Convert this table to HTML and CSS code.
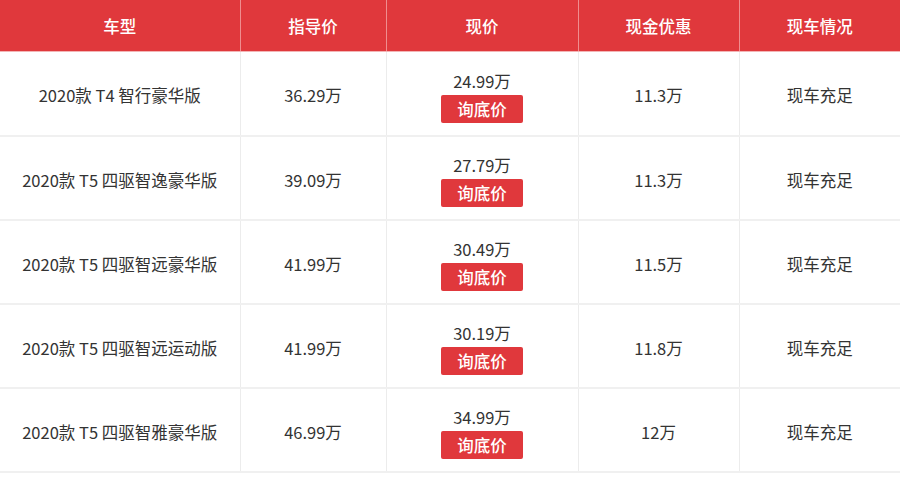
FILE: index.html
```html
<!DOCTYPE html>
<html lang="zh-CN">
<head>
<meta charset="utf-8">
<title>价格表</title>
<link rel="stylesheet" href="styles.css">
</head>
<body>
<table class="price-table">
  <colgroup>
    <col class="c1"><col class="c2"><col class="c3"><col class="c4"><col class="c5">
  </colgroup>
  <thead>
    <tr><th>车型</th><th>指导价</th><th>现价</th><th>现金优惠</th><th>现车情况</th></tr>
  </thead>
  <tbody>
    <tr><td>2020款 T4 智行豪华版</td><td>36.29万</td><td><div class="now"><span>24.99万</span><a class="ask">询底价</a></div></td><td>11.3万</td><td>现车充足</td></tr>
    <tr><td>2020款 T5 四驱智逸豪华版</td><td>39.09万</td><td><div class="now"><span>27.79万</span><a class="ask">询底价</a></div></td><td>11.3万</td><td>现车充足</td></tr>
    <tr><td>2020款 T5 四驱智远豪华版</td><td>41.99万</td><td><div class="now"><span>30.49万</span><a class="ask">询底价</a></div></td><td>11.5万</td><td>现车充足</td></tr>
    <tr><td>2020款 T5 四驱智远运动版</td><td>41.99万</td><td><div class="now"><span>30.19万</span><a class="ask">询底价</a></div></td><td>11.8万</td><td>现车充足</td></tr>
    <tr><td>2020款 T5 四驱智雅豪华版</td><td>46.99万</td><td><div class="now"><span>34.99万</span><a class="ask">询底价</a></div></td><td>12万</td><td>现车充足</td></tr>
  </tbody>
</table>
</body>
</html>
```
FILE: styles.css
```css
html, body {
  margin: 0;
  padding: 0;
  background: #fff;
}
body {
  font-family: "Noto Sans CJK SC", "Noto Sans", sans-serif;
  color: #333;
  font-size: 16.5px;
}
.price-table {
  width: 900px;
  border-collapse: collapse;
  table-layout: fixed;
}
.c1 { width: 240px; }
.c2 { width: 146px; }
.c3 { width: 192px; }
.c4 { width: 161px; }
.c5 { width: 161px; }
.price-table th {
  background: #e0383c;
  color: #fff;
  font-weight: 500;
  font-size: 16.5px;
  height: 51px;
  padding: 0;
  border-left: 1px solid #ef8d8f;
  border-bottom: 1px solid #f3b5b6;
}
.price-table th:first-child { border-left: none; }
.price-table td {
  height: 82px;
  padding: 0;
  text-align: center;
  vertical-align: middle;
  border-left: 1px solid #ececec;
  border-bottom: 2px solid #f0f0f0;
  padding-top: 4px;
  box-sizing: border-box;
}
.price-table td:first-child { border-left: none; }
.price-table tbody tr { height: 84px; }
.now {
  display: flex;
  flex-direction: column;
  align-items: center;
  gap: 3px;
  padding-top: 2px;
}
.now span {
  line-height: 22px;
}
.ask {
  display: block;
  width: 82px;
  height: 28px;
  line-height: 28px;
  background: #e0383c;
  color: #fff;
  border-radius: 2px;
  font-size: 16.5px;
  font-weight: 500;
}
```
